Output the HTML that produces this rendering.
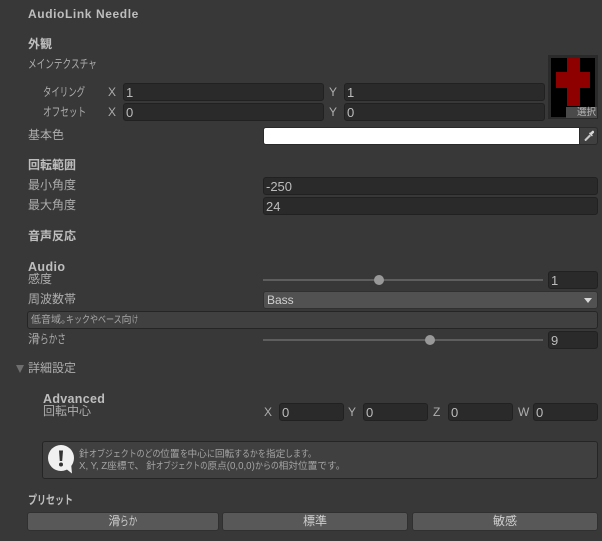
<!DOCTYPE html>
<html lang="ja"><head><meta charset="utf-8"><title>AudioLink Needle</title>
<style>
html,body{margin:0;padding:0}
body{width:602px;height:541px;background:#383838;position:relative;overflow:hidden;font-family:"Liberation Sans","Noto Sans CJK JP",sans-serif;font-size:12px;color:#adadad}
.t{position:absolute;white-space:nowrap;line-height:16px;height:16px}
.b{font-weight:bold;color:#bebebe}
.s{display:inline-block;--k:.72;transform:scaleX(var(--k));transform-origin:0 50%;margin-right:calc(var(--n)*(var(--k) - 1)*1em);white-space:nowrap}
.f{position:absolute;box-sizing:border-box;background:#2a2a2a;border:1px solid #212121;border-radius:3px;color:#bcbcbc;font-size:13px;line-height:18px;padding-left:2px;height:18px;white-space:nowrap}
.tr{position:absolute;left:263px;width:280px;height:2px;background:#5e5e5e}
.th{position:absolute;width:10px;height:10px;border-radius:50%;background:#999}
.btn{position:absolute;top:512px;height:19px;box-sizing:border-box;background:#585858;border:1px solid #303030;border-radius:3px;color:#d0d0d0;text-align:center;font-size:12px;line-height:16px}
.h{font-size:9.7px;line-height:13px;color:#a4a4a4}
.h .s{--k:.82}
</style></head><body>
<div class="t b" style="left:28px;top:6px;font-size:12px;letter-spacing:.6px">AudioLink Needle</div>
<div class="t b" style="left:28px;top:36px">外観</div>
<div class="t" style="left:28px;top:56px"><span class="s" style="--n:8">メインテクスチャ</span></div>
<div class="t" style="left:43px;top:84px"><span class="s" style="--n:5;--k:.7">タイリング</span></div>
<div class="t" style="left:108px;top:84px">X</div>
<div class="f" style="left:123px;top:83px;width:201px">1</div>
<div class="t" style="left:329px;top:84px">Y</div>
<div class="f" style="left:344px;top:83px;width:201px">1</div>
<div class="t" style="left:43px;top:104px"><span class="s" style="--n:5">オフセット</span></div>
<div class="t" style="left:108px;top:104px">X</div>
<div class="f" style="left:123px;top:103px;width:201px">0</div>
<div class="t" style="left:329px;top:104px">Y</div>
<div class="f" style="left:344px;top:103px;width:201px">0</div>
<div style="position:absolute;left:548px;top:55px;width:50px;height:64px;background:#2a2a2a"></div>
<div style="position:absolute;left:551px;top:58px;width:44px;height:59px;background:#000"></div>
<div style="position:absolute;left:567px;top:58px;width:13px;height:48px;background:#8e0000"></div>
<div style="position:absolute;left:556px;top:72px;width:34px;height:16px;background:#8e0000"></div>
<div style="position:absolute;left:566px;top:107px;width:31px;height:11px;background:#4a4a4a;color:#b8b8b8;font-size:9.5px;line-height:11px;text-align:right;padding-right:1px;box-sizing:border-box">選択</div>
<div class="t" style="left:28px;top:127px">基本色</div>
<div style="position:absolute;left:263px;top:127px;width:317px;height:18px;background:#fff;border-radius:3px 0 0 3px;box-sizing:border-box;border:1px solid #2a2a2a;border-right:0"></div>
<div style="position:absolute;left:579px;top:127px;width:19px;height:18px;background:#404040;border:1px solid #2a2a2a;box-sizing:border-box;border-radius:0 3px 3px 0"></div>
<svg style="position:absolute;left:583px;top:129px" width="12" height="14" viewBox="0 0 12 14"><path d="M2 12 L1.5 10.5 L6.5 5.5 L8 7 L3 12 Z" fill="#c8c8c8"/><path d="M6 4.5 L9 7.5 L9.8 6.5 L9 5.6 L11 3.6 Q11.4 2.4 10.4 1.8 Q9.6 1.4 8.8 2.2 L7.5 3.6 L6.9 3.4 Z" fill="#d8d8d8"/></svg>
<div class="t b" style="left:28px;top:157px">回転範囲</div>
<div class="t" style="left:28px;top:177px">最小角度</div>
<div class="f" style="left:263px;top:177px;width:335px">-250</div>
<div class="t" style="left:28px;top:197px">最大角度</div>
<div class="f" style="left:263px;top:197px;width:335px">24</div>
<div class="t b" style="left:28px;top:228px">音声反応</div>
<div class="t b" style="left:28px;top:259px;font-size:12.5px;letter-spacing:.4px">Audio</div>
<div class="t" style="left:28px;top:271px">感度</div>
<div class="tr" style="top:279px"></div>
<div class="th" style="left:374px;top:275px"></div>
<div class="f" style="left:548px;top:271px;width:50px">1</div>
<div class="t" style="left:28px;top:291px">周波数帯</div>
<div style="position:absolute;left:263px;top:291px;width:335px;height:18px;box-sizing:border-box;background:#515151;border:1px solid #303030;border-radius:3px;color:#d0d0d0;font-size:12px;line-height:16px;padding-left:3px">Bass</div>
<div style="position:absolute;left:584px;top:298px;width:0;height:0;border-left:4px solid transparent;border-right:4px solid transparent;border-top:5px solid #d8d8d8"></div>
<div style="position:absolute;left:27px;top:311px;width:571px;height:18px;box-sizing:border-box;background:#404040;border:1px solid #252525;border-radius:3px;color:#a8a8a8;font-size:10px;line-height:17px;padding-left:3px;white-space:nowrap">低音域<span style="letter-spacing:-5px">。</span><span class="s" style="--n:7;--k:.8">キックやベース</span>向<span class="s" style="--n:1;--k:.6">け</span></div>
<div class="t" style="left:28px;top:331px">滑<span class="s" style="--n:3">らかさ</span></div>
<div class="tr" style="top:339px"></div>
<div class="th" style="left:425px;top:335px"></div>
<div class="f" style="left:548px;top:331px;width:50px">9</div>
<div style="position:absolute;left:16px;top:365px;width:0;height:0;border-left:4.5px solid transparent;border-right:4.5px solid transparent;border-top:8px solid #6e6e6e"></div>
<div class="t" style="left:28px;top:360px">詳細設定</div>
<div class="t b" style="left:43px;top:391px;font-size:12.5px;letter-spacing:.3px">Advanced</div>
<div class="t" style="left:43px;top:403px">回転中心</div>
<div class="t" style="left:264px;top:404px">X</div>
<div class="f" style="left:279px;top:403px;width:65px">0</div>
<div class="t" style="left:348px;top:404px">Y</div>
<div class="f" style="left:363px;top:403px;width:65px">0</div>
<div class="t" style="left:433px;top:404px">Z</div>
<div class="f" style="left:448px;top:403px;width:65px">0</div>
<div class="t" style="left:518px;top:404px">W</div>
<div class="f" style="left:533px;top:403px;width:65px">0</div>
<div style="position:absolute;left:42px;top:441px;width:556px;height:38px;box-sizing:border-box;background:#404040;border:1px solid #252525;border-radius:3px"></div>
<svg style="position:absolute;left:47px;top:444px" width="28" height="30" viewBox="0 0 28 30"><circle cx="14" cy="14" r="13" fill="#f0f0f0"/><path d="M18 24 L25 29.5 L24 19 Z" fill="#f0f0f0"/><path d="M12 6.5 H16 L15.2 17 H12.8 Z" fill="#333"/><circle cx="14" cy="20.5" r="2" fill="#333"/></svg>
<div class="t h" style="left:79px;top:448px">針<span class="s" style="--n:9">オブジェクトのどの</span>位置<span class="s" style="--n:1">を</span>中心<span class="s" style="--n:1">に</span>回転<span class="s" style="--n:4">するかを</span>指定<span class="s" style="--n:4">します。</span></div>
<div class="t h" style="left:79px;top:460px">X, Y, Z座標<span class="s" style="--n:1">で</span><span style="margin-right:2px">、</span>針<span class="s" style="--n:7;--k:.76">オブジェクトの</span>原点(0,0,0)<span class="s" style="--n:3">からの</span>相対位置<span class="s" style="--n:3;--k:1">です。</span></div>
<div class="t b" style="left:28px;top:492px"><span class="s" style="--n:5;--k:.75">プリセット</span></div>
<div class="btn" style="left:27px;width:192px">滑<span class="s" style="--n:2;--k:.72">らか</span></div>
<div class="btn" style="left:222px;width:186px">標準</div>
<div class="btn" style="left:412px;width:186px">敏感</div>
</body></html>
